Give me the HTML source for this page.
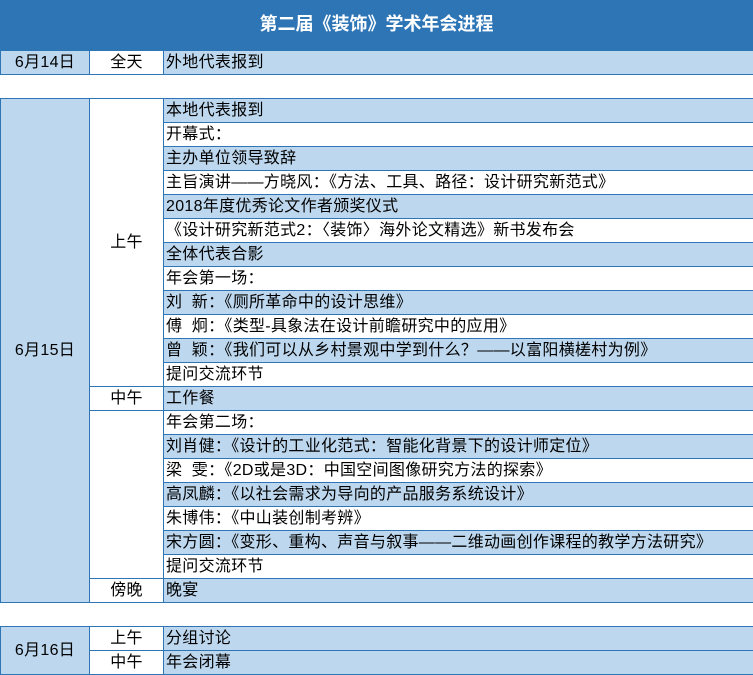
<!DOCTYPE html>
<html><head><meta charset="utf-8"><style>
body{margin:0;width:753px;height:673px;overflow:hidden;background:#fff;font-family:"Liberation Sans","Noto Sans CJK SC",sans-serif;font-size:16px;color:#000}
.h{position:absolute;left:0;top:0;width:753px;height:50px;background:#2e75b6;color:#fff;font-size:18px;font-weight:bold;text-align:center;line-height:48px}
.c{position:absolute;box-sizing:border-box;border:1px solid #2e75b6;white-space:nowrap;overflow:hidden;letter-spacing:0.3px}
.b{background:#bdd7ee}.w{background:#fff}
.ctr{text-align:center}.l{padding-left:2px}
</style></head><body>
<div class="h">第二届《装饰》学术年会进程</div>
<div id="g"></div>
<script>
var H='';
function cell(x,y,w,h,cls,t){H+='<div class="c '+cls+'" style="left:'+x+'px;top:'+y+'px;width:'+(w+1)+'px;height:'+(h+1)+'px;line-height:'+(h-1)+'px">'+t+'</div>';}
cell(0,50,89,24,'b ctr','6月14日');cell(89,50,74,24,'w ctr','全天');cell(163,50,590,24,'b l','外地代表报到');
cell(0,98,89,504,'b ctr','6月15日');
cell(89,98,74,288,'w ctr','上午');cell(89,386,74,24,'w ctr','中午');cell(89,410,74,168,'w ctr','');cell(89,578,74,24,'w ctr','傍晚');
var r=['本地代表报到','开幕式：','主办单位领导致辞','主旨演讲——方晓风：《方法、工具、路径：设计研究新范式》','2018年度优秀论文作者颁奖仪式','《设计研究新范式2：〈装饰〉海外论文精选》新书发布会','全体代表合影','年会第一场：','刘&nbsp;&nbsp;新：《厕所革命中的设计思维》','傅&nbsp;&nbsp;炯：《类型-具象法在设计前瞻研究中的应用》','曾&nbsp;&nbsp;颖：《我们可以从乡村景观中学到什么？——以富阳横槎村为例》','提问交流环节','工作餐','年会第二场：','刘肖健：《设计的工业化范式：智能化背景下的设计师定位》','梁&nbsp;&nbsp;雯：《2D或是3D：中国空间图像研究方法的探索》','高凤麟：《以社会需求为导向的产品服务系统设计》','朱博伟：《中山装创制考辨》','宋方圆：《变形、重构、声音与叙事——二维动画创作课程的教学方法研究》','提问交流环节','晚宴'];
for(var i=0;i<r.length;i++)cell(163,98+24*i,590,24,(i%2?'w':'b')+' l',r[i]);
cell(0,626,89,48,'b ctr','6月16日');cell(89,626,74,24,'w ctr','上午');cell(89,650,74,24,'w ctr','中午');
cell(163,626,590,24,'b l','分组讨论');cell(163,650,590,24,'b l','年会闭幕');
document.getElementById('g').innerHTML=H;
</script>
</body></html>
